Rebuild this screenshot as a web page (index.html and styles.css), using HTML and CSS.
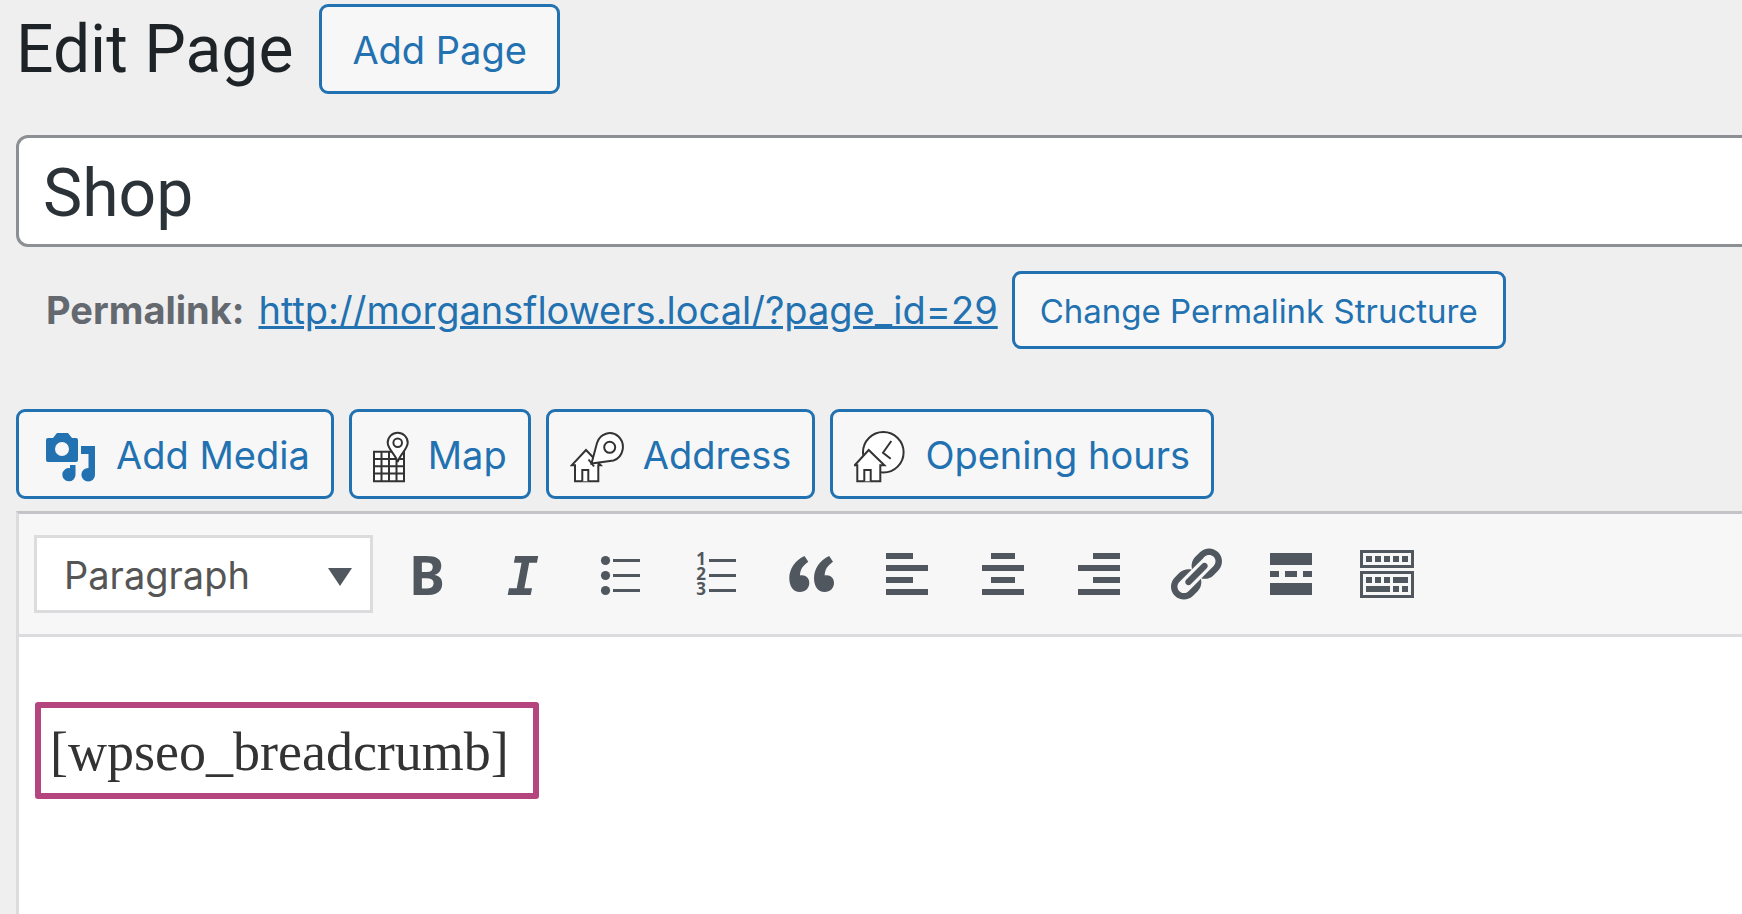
FILE: index.html
```html
<!DOCTYPE html>
<html lang="en-US">
<head>
  <meta charset="UTF-8">
  <title>Edit Page</title>
  <link rel="stylesheet" href="styles.css">
</head>
<body>
  <main class="wrap">
    <header class="page-header">
      <h1>Edit Page</h1>
      <a class="button" href="#">Add Page</a>
    </header>

    <form class="post-form">
      <input class="title-input" type="text" value="Shop" aria-label="Title">

      <div class="permalink">
        <strong>Permalink:</strong>
        <a href="#">http://morgansflowers.local/?page_id=29</a>
        <button type="button" class="button button-small">Change Permalink Structure</button>
      </div>

      <div class="media-buttons">
        <button type="button" class="button">
          <svg width="57" height="60" viewBox="0 0 57 60" fill="#2271b1" aria-hidden="true">
            <path fill-rule="evenodd" d="M8 13h5l4-5h11l4 5h4q2 0 2 2v20q0 2-2 2H8q-2 0-2-2V15q0-2 2-2zM22 17a7 7 0 1 0 0 14a7 7 0 1 0 0-14z"/>
            <path d="M41 21h14v28.500a6.800 6.800 0 1 1-6.500-6.500V29H41z"/>
            <path d="M30 40h5.500v9.500a6.600 6.600 0 1 1-5.500-6.300z"/>
          </svg>
          Add Media
        </button>
        <button type="button" class="button">
          <svg class="line-icon" width="36" height="60" viewBox="0 0 36 60" aria-hidden="true">
            <path d="M1 26.700h30v29.600H1zM8.500 26.700v29.600M16 26.700v29.600M23.500 26.700v29.600M1 34h30M1 41.300h30M1 48.600h30"/>
            <path d="M24.700 37C23 30 14.700 24 14.700 17.700a10 10 0 0 1 20 0C34.700 24 26.400 30 24.700 37z"/>
            <circle cx="24.700" cy="17.700" r="4.300"/>
          </svg>
          Map
        </button>
        <button type="button" class="button">
          <svg class="line-icon" width="54" height="60" viewBox="0 0 54 60" aria-hidden="true">
            <path d="M5 56.300V40.300H1.700L16 25l14.700 15.300h-2.400v16z"/>
            <path d="M12.300 56.300V45h6v11.300"/>
            <path d="M21.500 38.500L27 18C30 8.500 41 5 48.500 11.500C56 19 53.500 32 43.500 35.500z"/>
            <path d="M18.500 34.500l5.500 7"/>
            <circle cx="39.700" cy="22.300" r="5.500"/>
          </svg>
          Address
        </button>
        <button type="button" class="button">
          <svg class="line-icon" width="52" height="60" viewBox="0 0 52 60" aria-hidden="true">
            <circle cx="29.300" cy="27.300" r="20.300"/>
            <path d="M37.300 16L29 27.700l7.700 6" fill="none"/>
            <path d="M3.300 56.300V40.300H.7L14.700 25l15.700 15.300h-4.100v16z"/>
            <path d="M10.300 56.300V45h6.400v11.300"/>
          </svg>
          Opening hours
        </button>
      </div>

      <section class="editor">
        <div class="toolbar" role="toolbar" aria-label="Formatting">
          <div class="format">
            <select aria-label="Format">
              <option>Paragraph</option>
              <option>Heading 1</option>
              <option>Heading 2</option>
              <option>Preformatted</option>
            </select>
            <svg class="format-arrow" width="24" height="18" viewBox="0 0 24 18" aria-hidden="true">
              <path d="M0 0h24L12 18z"/>
            </svg>
          </div>
          <button type="button" aria-label="Bold" class="bold">B</button>
          <button type="button" aria-label="Italic" class="italic">I</button>
          <button type="button" aria-label="Bulleted list">
            <svg width="60" height="60" viewBox="0 0 60 60">
              <circle cx="16.500" cy="16.500" r="4.600"/>
              <circle cx="16.500" cy="31.500" r="4.600"/>
              <circle cx="16.500" cy="46.500" r="4.600"/>
              <path d="M24 15h27v3H24zM24 30h27v3H24zM24 45h27v3H24z"/>
            </svg>
          </button>
          <button type="button" aria-label="Numbered list">
            <svg class="numbers" width="60" height="60" viewBox="0 0 60 60">
              <text x="16" y="21">1</text>
              <text x="16" y="36">2</text>
              <text x="16" y="51">3</text>
              <path d="M24 15h27v3H24zM24 30h27v3H24zM24 45h27v3H24z"/>
            </svg>
          </button>
          <button type="button" aria-label="Blockquote">
            <svg width="60" height="60" viewBox="0 0 60 60">
              <path d="M23.500 12l3.800 5.700C22 21.500 19 25.500 19 31.500C24.500 30.500 28.300 34 28.300 39C28.300 44 24.500 48 19 48C12 48 8.300 42 8.300 34C8.300 25 14 16.500 23.500 12z"/>
              <path d="M48.200 12l3.800 5.700C46.700 21.500 43.700 25.500 43.700 31.500C49.200 30.500 53 34 53 39C53 44 49.200 48 43.700 48C36.700 48 33 42 33 34C33 25 38.700 16.500 48.200 12z"/>
            </svg>
          </button>
          <button type="button" aria-label="Align left">
            <svg width="60" height="60" viewBox="0 0 60 60">
              <path d="M9 9h27v6H9zM9 21h42v6H9zM9 33h27v6H9zM9 45h42v6H9z"/>
            </svg>
          </button>
          <button type="button" aria-label="Align center">
            <svg width="60" height="60" viewBox="0 0 60 60">
              <path d="M18 9h24v6H18zM9 21h42v6H9zM18 33h24v6H18zM9 45h42v6H9z"/>
            </svg>
          </button>
          <button type="button" aria-label="Align right">
            <svg width="60" height="60" viewBox="0 0 60 60">
              <path d="M24 9h27v6H24zM9 21h42v6H9zM24 33h27v6H24zM9 45h42v6H9z"/>
            </svg>
          </button>
          <button type="button" aria-label="Insert link">
            <svg width="60" height="60" viewBox="0 0 20 20">
              <path d="M17.740 2.760c1.680 1.690 1.680 4.410 0 6.100l-1.530 1.520c-1.120 1.120-2.700 1.470-4.140 1.090l2.620-2.610.76-.77.76-.76c.84-.84.84-2.200 0-3.040-.84-.85-2.200-.85-3.040 0l-.77.76-3.380 3.380c-.37-1.440-.02-3.020 1.100-4.140l1.520-1.530c1.690-1.680 4.420-1.680 6.100 0zM8.590 13.430l5.340-5.340c.42-.42.42-1.100 0-1.520-.44-.43-1.130-.39-1.530 0l-5.330 5.340c-.42.42-.42 1.100 0 1.520.44.43 1.130.39 1.520 0zm-.76 2.290l4.140-4.150c.38 1.440.03 3.020-1.090 4.140l-1.520 1.530c-1.690 1.680-4.410 1.680-6.100 0-1.680-1.680-1.680-4.420 0-6.100l1.530-1.520c1.120-1.120 2.700-1.470 4.140-1.100l-4.140 4.150c-.85.84-.85 2.200 0 3.050.84.84 2.200.84 3.040 0z"/>
            </svg>
          </button>
          <button type="button" aria-label="Insert Read More tag">
            <svg width="60" height="60" viewBox="0 0 60 60">
              <path d="M9 9h42v12H9zM9 27h9v6H9zM24 27h12v6H24zM42 27h9v6h-9zM9 39h42v12H9z"/>
            </svg>
          </button>
          <button type="button" aria-label="Toolbar Toggle">
            <svg width="60" height="60" viewBox="0 0 60 60">
              <path fill-rule="evenodd" d="M3 6h54v18H3zM6 9v12h48V9zM3 27h54v27H3zM6 30v21h48V30z"/>
              <path d="M9 12h6v6H9zM18 12h6v6h-6zM27 12h6v6h-6zM36 12h6v6h-6zM45 12h6v6h-6zM9 33h6v6H9zM18 33h6v6h-6zM27 33h6v6h-6zM36 33h15v6H36zM9 42h24v6H9zM36 42h6v6h-6zM45 42h6v6h-6z"/>
            </svg>
          </button>
        </div>

        <div class="content" contenteditable="true" role="textbox" aria-label="Content" spellcheck="false">
          <p><mark>[wpseo_breadcrumb]</mark></p>
        </div>
      </section>
    </form>
  </main>
</body>
</html>
```

FILE: styles.css
```css
* {
  box-sizing: border-box;
}

body {
  margin: 0;
  background: #efefef;
  color: #3c434a;
  font-family: Inter, sans-serif;
  font-size: 38px;
  overflow: hidden;
}

.wrap {
  display: flex;
  flex-direction: column;
  min-height: 100vh;
  padding: 4px 0 0 16px;
}

.page-header {
  display: flex;
  align-items: center;
  gap: 26px;
}

h1 {
  margin: 0;
  padding-top: 2px;
  color: #1d2327;
  font-family: Roboto, sans-serif;
  font-size: 66px;
  font-weight: 400;
  line-height: 88px;
}

.button {
  display: inline-flex;
  align-items: center;
  gap: 19px;
  height: 90px;
  padding: 2px 21px 0;
  border: 3px solid #2271b1;
  border-radius: 9px;
  background: #f7f7f7;
  color: #2271b1;
  font-family: inherit;
  font-size: 38px;
  text-decoration: none;
  white-space: nowrap;
  cursor: pointer;
}

.page-header .button {
  padding: 2px 30px 0;
}

.button-small {
  height: 78px;
  padding: 1px 25px 0;
  font-size: 33px;
}

.post-form {
  display: flex;
  flex-direction: column;
  flex: 1;
}

.title-input {
  height: 112px;
  margin: 41px -20px 0 0;
  padding: 5px 24px 0;
  border: 3px solid #8c8f94;
  border-radius: 12px;
  background: #fff;
  color: #2c3338;
  font-family: Roboto, sans-serif;
  font-size: 66px;
}

.permalink {
  display: flex;
  align-items: center;
  gap: 14px;
  margin-top: 24px;
  padding-left: 30px;
  color: #646970;
  white-space: nowrap;
}

.permalink strong {
  font-weight: 700;
}

.permalink a {
  color: #2271b1;
}

.media-buttons {
  display: flex;
  gap: 15px;
  margin: 60px 0 12px;
}

.line-icon {
  fill: #fff;
  stroke: #333;
  stroke-width: 2;
}

.editor {
  display: flex;
  flex-direction: column;
  flex: 1;
  border-top: 3px solid #c3c4c7;
  border-left: 3px solid #dcdcde;
  background: #fff;
}

.toolbar {
  display: flex;
  align-items: center;
  gap: 12px;
  height: 123px;
  padding: 0 15px;
  border-bottom: 3px solid #dcdcde;
  background: #f7f7f7;
}

.toolbar button {
  display: flex;
  align-items: center;
  justify-content: center;
  width: 84px;
  height: 84px;
  padding: 0;
  border: 0;
  background: none;
  color: #50575e;
  cursor: pointer;
}

.toolbar svg {
  fill: #50575e;
}

.toolbar .bold {
  font: bold 54px "Noto Sans", sans-serif;
}

.toolbar .italic {
  padding-top: 4px;
  font: italic bold 53px "DejaVu Sans Mono", monospace;
}

.numbers {
  font: bold 17px "Open Sans", sans-serif;
  text-anchor: middle;
}

.format {
  position: relative;
  width: 339px;
}

.format select {
  display: block;
  width: 100%;
  height: 78px;
  padding: 1px 27px 0;
  border: 3px solid #dcdcde;
  border-radius: 0;
  background: #fff;
  color: #555;
  font-family: inherit;
  font-size: 38px;
  appearance: none;
}

.format-arrow {
  position: absolute;
  top: 33px;
  right: 21px;
  pointer-events: none;
}

.content {
  flex: 1;
  padding: 65px 16px;
  outline: 0;
  color: #333;
  font-family: Georgia, "Liberation Serif", serif;
  font-size: 54px;
}

.content p {
  margin: 0;
}

mark {
  display: inline-block;
  padding: 4px 24px 0 9px;
  border: 6px solid #b5457f;
  border-radius: 3px;
  background: none;
  color: inherit;
  line-height: 81px;
}
```
